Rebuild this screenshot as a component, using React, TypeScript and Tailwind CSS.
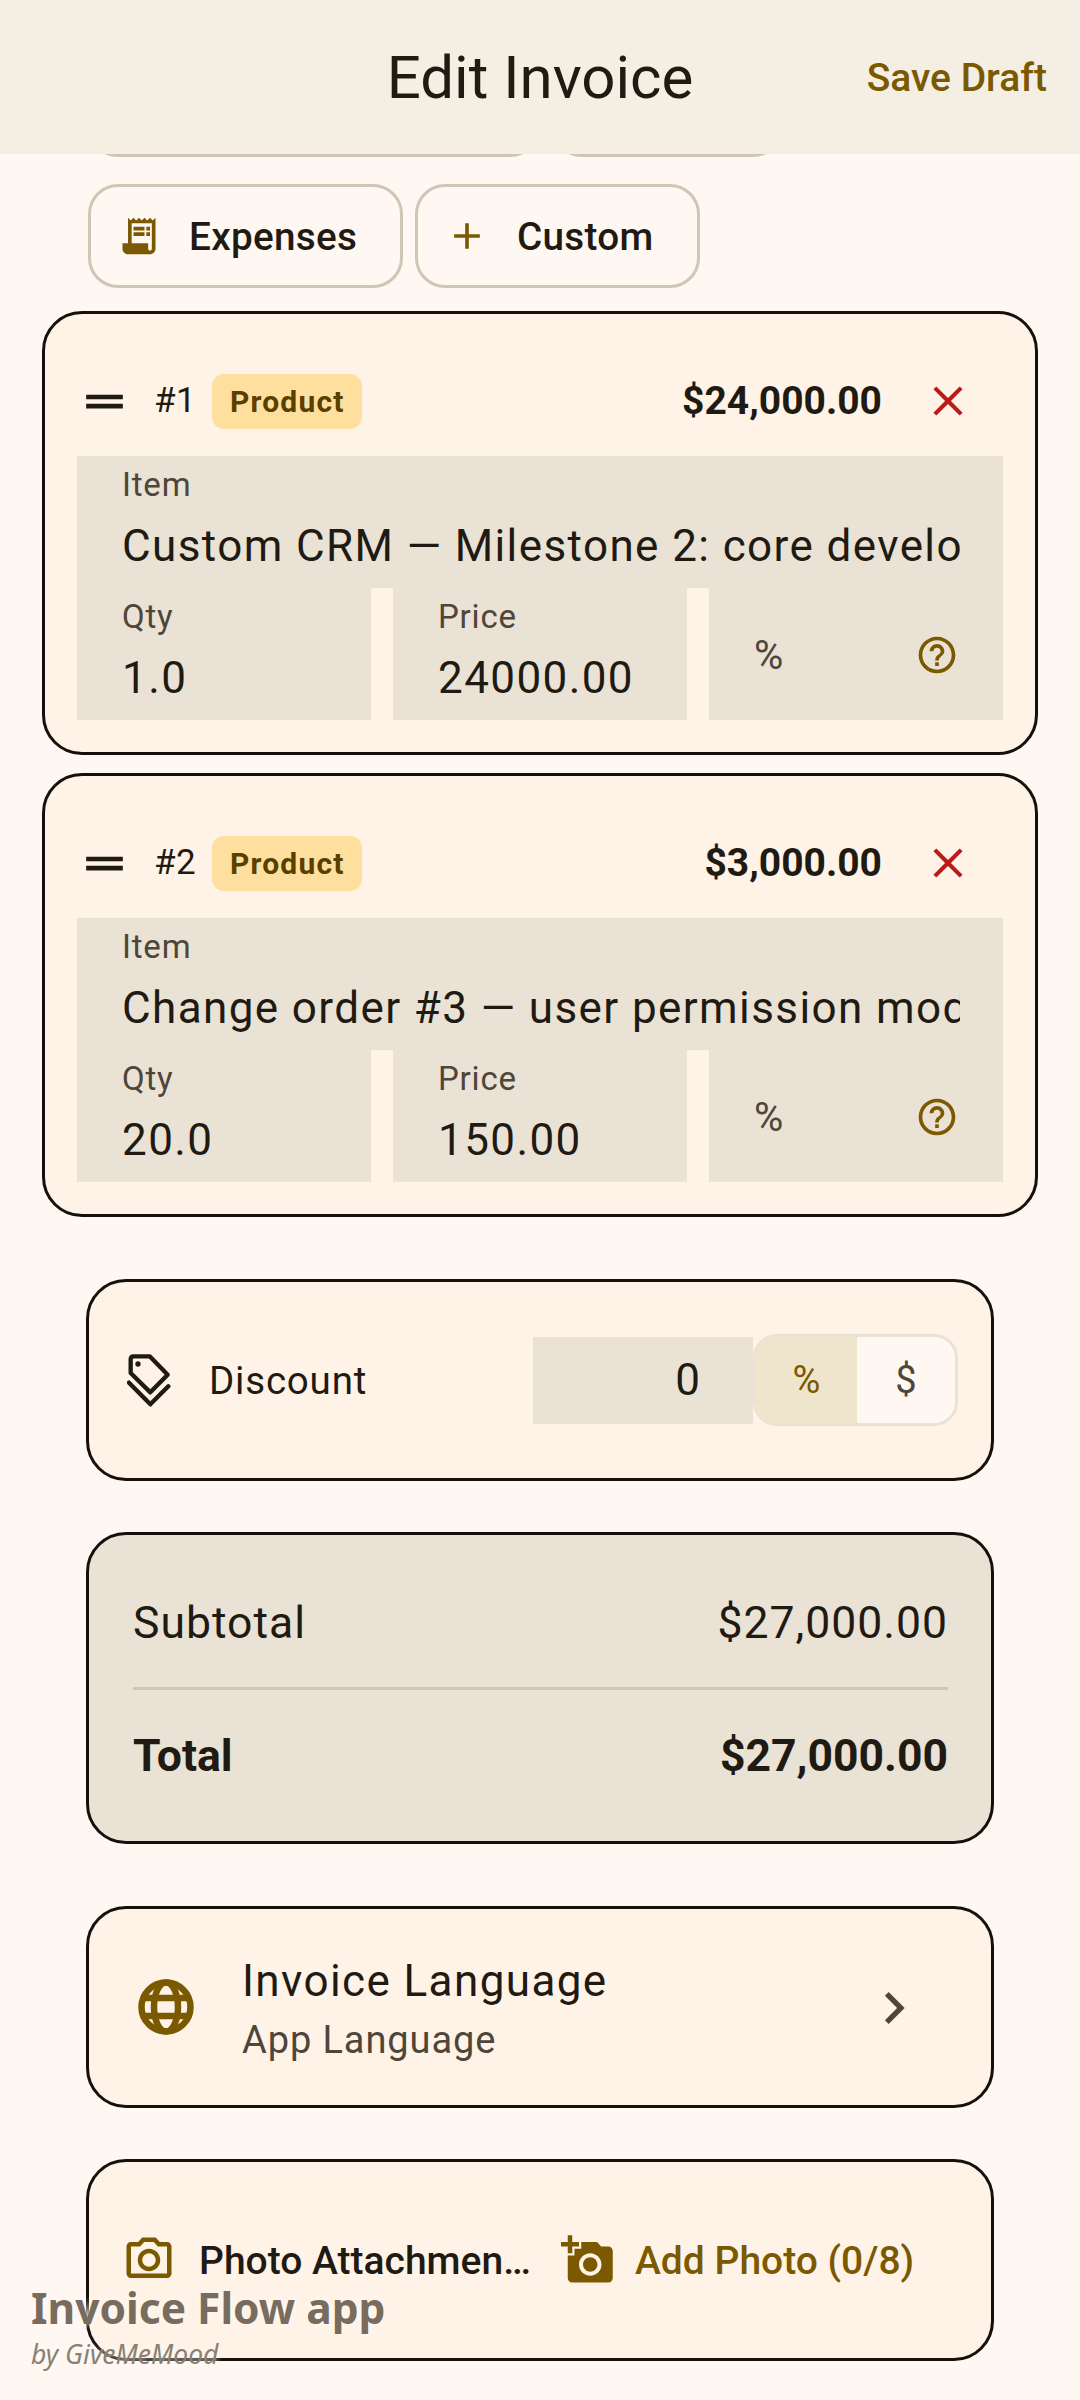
import React from 'react';
import { MdReceiptLong, MdAdd, MdDragHandle, MdClose, MdHelpOutline, MdChevronRight, MdOutlinePhotoCamera, MdAddAPhoto } from 'react-icons/md';

const TagsIcon = () => (
  <svg width="44" height="55" viewBox="50 35 132 165" fill="none" stroke="#1f1a12" strokeWidth="13" strokeLinejoin="round" strokeLinecap="round">
    <path d="M70 45H118L172 100L120 153L61 95V54Q61 45 70 45Z" />
    <circle cx="83" cy="68" r="8" fill="#1f1a12" stroke="none" />
    <path d="M56 124L120 189L174 135" />
  </svg>
);

const GlobeIcon = () => (
  <svg width="56" height="56" viewBox="0 0 56 56" fill="none" stroke="#7a5900" strokeWidth="6.5">
    <circle cx="28" cy="28" r="24.5" />
    <ellipse cx="28" cy="28" rx="12" ry="24.5" />
    <path d="M4 19H52M4 37H52" />
  </svg>
);

const Chip = ({ icon, label, className }: { icon: React.ReactNode; label: string; className: string }) => (
  <div className={`h-[104px] flex items-center rounded-[30px] border-[3px] border-[#cfc6b5] ${className}`}>
    <span className="flex justify-center">{icon}</span>
    <span className="ml-[28px] mt-[2px] text-[38.7px] font-medium text-[#1f1a12] tracking-[0.3px]">{label}</span>
  </div>
);

const Field = ({ label, value }: { label: string; value: string }) => (
  <div className="w-[294px] h-[132px] bg-[#eae2d5] pl-[45px]">
    <div className="text-[33px] leading-[40px] pt-[9px] h-[50px] text-[#4f4539] tracking-[0.8px]">{label}</div>
    <div className="text-[44px] leading-[58px] mt-[11px] text-[#1f1a12] tracking-[1.4px]">{value}</div>
  </div>
);

const LineItem = ({ num, total, name, qty, price }: { num: number; total: string; name: string; qty: string; price: string }) => (
  <div className="h-[444px] mx-[42px] rounded-[40px] border-[3px] border-[#14110c] bg-[#fff3e7] px-[32px]">
    <div className="h-[142px] pt-[32px] flex items-center">
      <MdDragHandle size={55} color="#1f1a12" />
      <span className="ml-[22px] text-[35px] text-[#1f1a12] tracking-[0.5px]">#{num}</span>
      <span className="ml-[16px] h-[55px] w-[150px] rounded-[12px] bg-[#ffdf9e] flex items-center justify-center text-[30px] font-bold tracking-[1.2px] text-[#5a4000]">Product</span>
      <span className="ml-auto text-[39px] font-bold text-[#1f1a12]">{total}</span>
      <span className="ml-[33px] mr-[22px] w-[66px] flex justify-center"><MdClose size={50} color="#ba1a1a" /></span>
    </div>
    <div className="w-[926px]">
      <div className="h-[132px] bg-[#eae2d5] pl-[45px] pr-[43px]">
        <div className="text-[33px] leading-[40px] pt-[9px] h-[50px] text-[#4f4539] tracking-[0.8px]">Item</div>
        <div className="text-[44px] leading-[58px] mt-[11px] text-[#1f1a12] tracking-[1.4px] whitespace-nowrap overflow-hidden">{name}</div>
      </div>
      <div className="flex gap-[22px]">
        <Field label="Qty" value={qty} />
        <Field label="Price" value={price} />
        <div className="w-[294px] h-[132px] bg-[#eae2d5] flex items-center pl-[45px] pr-[44px]">
          <span className="text-[40px] text-[#4f4539] mt-[4px]">%</span>
          <MdHelpOutline size={44} color="#7a5900" className="ml-auto mt-[2px]" />
        </div>
      </div>
    </div>
  </div>
);

const Panel = ({ className, children }: { className: string; children: React.ReactNode }) => (
  <div className={`mx-[86px] rounded-[40px] border-[3px] border-[#14110c] ${className}`}>{children}</div>
);

export default function App() {
  return (
    <div className="relative w-[1080px] h-[2400px] overflow-hidden bg-[#fff8f2] font-['Roboto',sans-serif]">
      {/* Header sits over the scrolled chips */}
      <div className="relative z-10 h-[154px] bg-[#f4eee3] flex items-center justify-center">
        <h1 className="text-[60px] text-[#1f1a12] mt-[2px]">Edit Invoice</h1>
        <span className="absolute right-[33px] mt-[2px] text-[39px] font-medium text-[#7a5900]">Save Draft</span>
      </div>

      <div className="-mt-[102px] h-[105px] flex gap-[12px] pl-[88px]">
        <div className="w-[452px] rounded-[30px] border-[3px] border-[#cfc6b5]" />
        <div className="w-[231px] rounded-[30px] border-[3px] border-[#cfc6b5]" />
      </div>

      <div className="mt-[27px] flex gap-[12px] pl-[88px]">
        <Chip className="w-[315px] pl-[26px]" icon={<MdReceiptLong size={44} color="#7a5900" />} label="Expenses" />
        <Chip className="w-[285px] pl-[27px]" icon={<MdAdd size={44} color="#7a5900" />} label="Custom" />
      </div>

      <div className="mt-[23px] flex flex-col gap-[18px]">
        <LineItem num={1} total="$24,000.00" name="Custom CRM — Milestone 2: core development" qty="1.0" price="24000.00" />
        <LineItem num={2} total="$3,000.00" name="Change order #3 — user permission module" qty="20.0" price="150.00" />
      </div>

      <div className="mt-[62px]">
        <Panel className="h-[202px] bg-[#fff3e7] flex items-center pl-[38px]">
          <TagsIcon />
          <span className="ml-[38px] mt-[2px] text-[38.5px] text-[#1f1a12] tracking-[0.8px]">Discount</span>
          <div className="ml-auto flex items-center mr-[33px]">
            <div className="w-[220px] h-[87px] bg-[#eae2d5] flex items-center justify-end pr-[53px] text-[44px] text-[#1f1a12]">0</div>
            <div className="w-[205px] h-[92px] flex rounded-[24px] border-[3px] border-[#eae2d5] overflow-hidden text-[38px]">
              <span className="w-[101px] bg-[#eee5cc] flex items-center justify-center text-[#7a5900]">%</span>
              <span className="flex-1 bg-[#fff8f2] flex items-center justify-center text-[#4f4539]">$</span>
            </div>
          </div>
        </Panel>
      </div>

      <div className="mt-[51px]">
        <Panel className="h-[312px] bg-[#eae2d5] pl-[44px] pr-[43px]">
          <div className="h-[152px] pt-[24px] flex items-center justify-between text-[44.5px] text-[#1f1a12] tracking-[1px]">
            <span>Subtotal</span>
            <span>$27,000.00</span>
          </div>
          <div className="h-[3px] bg-[#cfc6b5]" />
          <div className="h-[131px] pt-[2px] flex items-center justify-between text-[44.5px] font-bold text-[#1f1a12]">
            <span>Total</span>
            <span>$27,000.00</span>
          </div>
        </Panel>
      </div>

      <div className="mt-[62px]">
        <Panel className="h-[202px] bg-[#fff3e7] flex items-center pl-[49px]">
          <GlobeIcon />
          <div className="ml-[48px] pt-[3px]">
            <div className="text-[44px] leading-[58px] text-[#1f1a12] tracking-[1.4px]">Invoice Language</div>
            <div className="mt-[5px] text-[38px] leading-[50px] text-[#4f4539] tracking-[0.9px]">App Language</div>
          </div>
          <MdChevronRight size={64} color="#4f4539" className="ml-auto mr-[65px] mt-[2px]" />
        </Panel>
      </div>

      <div className="mt-[51px]">
        <Panel className="h-[202px] bg-[#fff3e7] flex items-center pl-[33px]">
          <MdOutlinePhotoCamera size={54} color="#7a5900" />
          <span className="ml-[23px] mt-[2px] text-[39px] font-medium text-[#1f1a12] w-[331px] whitespace-nowrap">Photo Attachmen…</span>
          <MdAddAPhoto size={54} color="#7a5900" className="ml-[31px]" />
          <span className="ml-[20px] mt-[2px] text-[39px] font-medium text-[#7a5900]">Add Photo (0/8)</span>
        </Panel>
      </div>

      {/* Watermark */}
      <div className="absolute left-[31px] top-[2280px] font-['Noto_Sans',sans-serif] [text-shadow:0_0_6px_#fff8f2]">
        <div className="text-[42.5px] leading-[56px] font-bold text-[#786c5e]">Invoice Flow app</div>
        <div className="text-[26.5px] leading-[36px] italic text-[#8a8074]">by GiveMeMood</div>
      </div>
    </div>
  );
}
